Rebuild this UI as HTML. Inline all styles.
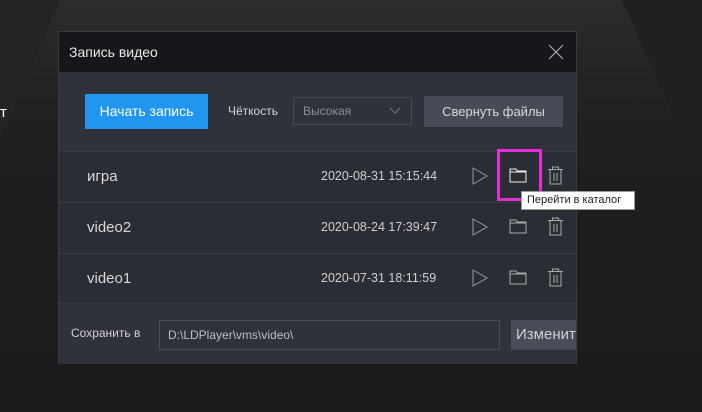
<!DOCTYPE html>
<html><head><meta charset="utf-8"><style>
*{margin:0;padding:0;box-sizing:border-box}
body{width:702px;height:412px;overflow:hidden;background:#1c1c1d;font-family:"Liberation Sans","DejaVu Sans",sans-serif;position:relative}
.bg1{position:absolute;left:0;top:0;width:702px;height:412px;background:linear-gradient(180deg,#2c2c2e 0,#262627 60px,#1f1f20 140px,#1c1c1d 412px)}
.tri{position:absolute;left:0;top:0;width:0;height:0;border-left:60px solid #242425;border-bottom:140px solid transparent}
.tri2{position:absolute;right:0;top:0;width:0;height:0;border-right:80px solid #202021;border-bottom:180px solid transparent}
.t{position:absolute;left:0;top:104px;color:#fff;font-size:15px}
.dlg{position:absolute;left:58px;top:31px;width:519px;height:333px;background:#30323b;border:1px solid #3a3c44}
.hd{height:40px;background:#16171b;color:#e8e8e8;font-size:14px;line-height:40px;padding-left:10px;position:relative}
.x{position:absolute;right:12px;top:12px}
.btn{position:absolute;left:26px;top:62px;width:123px;height:35px;background:#2196f0;color:#fff;font-size:14px;line-height:35px;text-align:center}
.lab{position:absolute;left:169px;top:72px;color:#d8d8d8;font-size:12px}
.sel{position:absolute;left:234px;top:65px;width:119px;height:28px;border:1px solid #484b55;color:#8d8f97;font-size:12px;line-height:26px;padding-left:9px}
.sel svg{position:absolute;right:10px;top:9px}
.b2{position:absolute;left:365px;top:64px;width:139px;height:31px;background:#484a55;color:#d8d8dc;font-size:13px;line-height:31px;text-align:center}
.row{position:absolute;left:0;width:517px;height:50px;background:#2b2d34;border-top:1px solid #383a42}
.row .n{position:absolute;left:28px;top:16px;color:#d8d8dc;font-size:15px}
.row .d{position:absolute;left:262px;top:17px;color:#d0d0d4;font-size:12.5px}
.row svg{position:absolute;top:15px}
.ft{position:absolute;left:0;top:271px;width:517px;height:61px;background:#30323b;border-top:1px solid #383a42}
.ft .l{position:absolute;left:12px;top:22px;color:#d0d0d4;font-size:12px}
.inp{position:absolute;left:100px;top:16px;width:341px;height:30px;border:1px solid #4a4d57;color:#bcbec4;font-size:12px;line-height:28px;padding-left:8px}
.ch{position:absolute;left:452px;top:16px;width:65px;height:30px;background:#4a4c57;color:#cfd0d6;font-size:15px;line-height:30px;padding-left:5px;overflow:hidden;white-space:nowrap}
.hl{position:absolute;left:497px;top:149px;width:45px;height:52px;border:3px solid #e22fd6}
.tip{position:absolute;left:521px;top:191px;width:114px;height:19px;background:#fff;border:1px solid #999;color:#222;font-size:11px;line-height:17px;padding-left:5px}
</style></head><body>
<div class="bg1"></div><div class="tri"></div><div class="tri2"></div>
<div class="t">т</div>
<div class="dlg">
<div class="hd">Запись видео<svg class="x" width="16" height="16"><path d="M1 1L15 15M15 1L1 15" stroke="#aaa" stroke-width="1.2"/></svg></div>
<div class="btn">Начать запись</div>
<div class="lab">Чёткость</div>
<div class="sel">Высокая<svg width="12" height="8"><path d="M1 1L6 6L11 1" stroke="#777" fill="none"/></svg></div>
<div class="b2">Свернуть файлы</div>
<div class="row" style="top:119px"><span class="n">игра</span><span class="d">2020-08-31 15:15:44</span>
<svg style="left:413px" width="16" height="18"><path d="M1 1L15 9L1 17Z" stroke="#999" fill="none"/></svg>
<svg style="left:450px" width="18" height="16"><path d="M1 2H7L8 4H17V15H1Z M1 5H17" stroke="#f0f0f0" fill="none"/></svg>
<svg style="left:488px;top:14px" width="17" height="19"><path d="M1 3.5H16M5.5 3.5V1H11.5V3.5M3 3.5V18H14V3.5M7 7V15M10 7V15" stroke="#aaa" fill="none"/></svg></div>
<div class="row" style="top:170px"><span class="n">video2</span><span class="d">2020-08-24 17:39:47</span>
<svg style="left:413px" width="16" height="18"><path d="M1 1L15 9L1 17Z" stroke="#999" fill="none"/></svg>
<svg style="left:450px" width="18" height="16"><path d="M1 2H7L8 4H17V15H1Z M1 5H17" stroke="#aaa" fill="none"/></svg>
<svg style="left:488px;top:14px" width="17" height="19"><path d="M1 3.5H16M5.5 3.5V1H11.5V3.5M3 3.5V18H14V3.5M7 7V15M10 7V15" stroke="#aaa" fill="none"/></svg></div>
<div class="row" style="top:221px"><span class="n">video1</span><span class="d">2020-07-31 18:11:59</span>
<svg style="left:413px" width="16" height="18"><path d="M1 1L15 9L1 17Z" stroke="#999" fill="none"/></svg>
<svg style="left:450px" width="18" height="16"><path d="M1 2H7L8 4H17V15H1Z M1 5H17" stroke="#aaa" fill="none"/></svg>
<svg style="left:488px;top:14px" width="17" height="19"><path d="M1 3.5H16M5.5 3.5V1H11.5V3.5M3 3.5V18H14V3.5M7 7V15M10 7V15" stroke="#aaa" fill="none"/></svg></div>
<div class="ft"><span class="l">Сохранить в</span><div class="inp">D:\LDPlayer\vms\video\</div><div class="ch">Изменить</div></div>
</div>
<div class="hl"></div>
<div class="tip">Перейти в каталог</div>
</body></html>
